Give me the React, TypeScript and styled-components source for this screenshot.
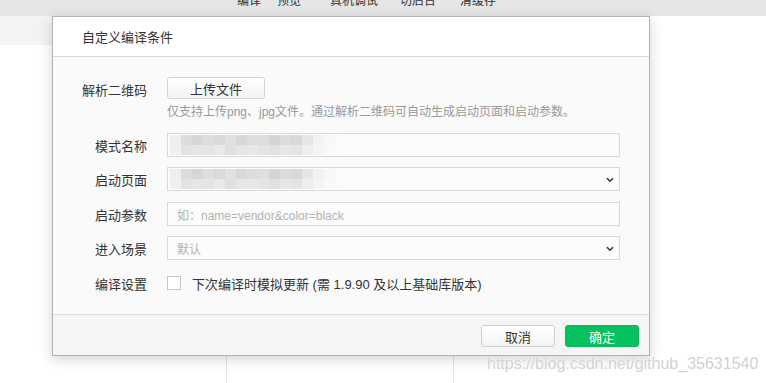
import React from "react";
import styled, { createGlobalStyle } from "styled-components";

const Global = createGlobalStyle`
  html, body { margin: 0; padding: 0; background: #fff; }
  body { font-family: "Liberation Sans", "Noto Sans CJK SC", sans-serif; }
  #root { width: 766px; height: 383px; }
`;

const Page = styled.div`
  position: relative;
  width: 766px;
  height: 383px;
  overflow: hidden;
  background: #fff;
  display: flex;
  flex-direction: column;
`;

const TopBar = styled.div`
  height: 16px;
  flex: none;
  background: #e6e6e6;
  overflow: hidden;
  display: flex;
  align-items: flex-start;
  padding-left: 237px;
`;

const ToolItem = styled.span<{ $ml: number }>`
  margin-left: ${(p) => p.$ml}px;
  margin-top: -5px;
  font-size: 12px;
  line-height: 12px;
  color: #333;
  white-space: nowrap;
`;

const SubStrip = styled.div`
  height: 29px;
  width: 320px;
  flex: none;
  background: #f3f3f3;
`;

const Behind = styled.div`
  flex: 1;
  display: flex;
  align-items: flex-end;
`;

const Column = styled.div<{ $w: number }>`
  width: ${(p) => p.$w}px;
  height: 28px;
  border-right: 1px solid #e4e4e4;
  box-sizing: border-box;
`;

const Dialog = styled.div`
  position: absolute;
  left: 52px;
  top: 16px;
  width: 598px;
  height: 340px;
  box-sizing: border-box;
  border: 1px solid #b2b2b2;
  background: #fafafa;
  box-shadow: 0 3px 12px rgba(0, 0, 0, 0.18);
  display: flex;
  flex-direction: column;
`;

const Header = styled.div`
  height: 39px;
  flex: none;
  background: #fff;
  border-bottom: 1px solid #d9d9d9;
  display: flex;
  align-items: center;
  padding-left: 29px;
  font-size: 13px;
  color: #333;
`;

const Body = styled.div`
  flex: 1;
  padding: 20px 29px 0 29px;
  display: grid;
  grid-template-columns: 65px 1fr;
  column-gap: 20px;
  align-content: start;
`;

const Label = styled.div<{ $mt?: number }>`
  margin-top: ${(p) => p.$mt ?? 0}px;
  height: 24px;
  display: flex;
  align-items: center;
  justify-content: flex-end;
  font-size: 13px;
  color: #333;
  white-space: nowrap;
`;

const Cell = styled.div<{ $mt?: number }>`
  margin-top: ${(p) => p.$mt ?? 0}px;
  min-width: 0;
`;

const UploadButton = styled.button`
  width: 98px;
  height: 22px;
  box-sizing: border-box;
  border: 1px solid #d3d3d3;
  border-radius: 3px;
  background: linear-gradient(#ffffff, #f3f3f3);
  font-family: inherit;
  font-size: 13px;
  color: #333;
  padding: 0;
  display: flex;
  align-items: center;
  justify-content: center;
`;

const Hint = styled.div`
  margin-top: 5px;
  font-size: 12px;
  line-height: 16px;
  color: #999;
  white-space: nowrap;
`;

const Field = styled.div`
  position: relative;
  height: 24px;
  box-sizing: border-box;
  border: 1px solid #d9d9d9;
  background: #fcfcfc;
  display: flex;
  align-items: center;
  padding: 0 9px;
  font-size: 12px;
  color: #b3b3b3;
`;

const Chevron = styled.svg`
  position: absolute;
  right: 5px;
  top: 9px;
`;

const BlurBox = styled.div`
  position: absolute;
  left: 2px;
  top: 1px;
  display: grid;
  grid-template-columns: repeat(17, 11px);
  grid-auto-rows: 10px;
  filter: blur(0.7px);
`;

const BlurCell = styled.div<{ $c: string }>`
  background: ${(p) => p.$c};
`;

const CheckRow = styled.div`
  display: flex;
  align-items: center;
  height: 24px;
  font-size: 13px;
  color: #333;
  white-space: nowrap;
`;

const CheckBox = styled.span`
  width: 14px;
  height: 14px;
  box-sizing: border-box;
  border: 1px solid #c8c8c8;
  background: #fff;
  margin-right: 11px;
  flex: none;
`;

const Footer = styled.div`
  height: 41px;
  flex: none;
  border-top: 1px solid #dcdcdc;
  background: #f5f5f5;
  display: flex;
  justify-content: flex-end;
  align-items: flex-start;
  gap: 10px;
  padding: 10px 10px 0 0;
  box-sizing: border-box;
`;

const FooterButton = styled.button<{ $primary?: boolean }>`
  width: 74px;
  height: 22px;
  box-sizing: border-box;
  border-radius: 3px;
  padding: 0;
  font-family: inherit;
  font-size: 13px;
  border: 1px solid ${(p) => (p.$primary ? "#07b85a" : "#d0d0d0")};
  background: ${(p) => (p.$primary ? "#07c160" : "linear-gradient(#ffffff, #f4f4f4)")};
  color: ${(p) => (p.$primary ? "#fff" : "#333")};
`;

const Watermark = styled.div`
  position: absolute;
  left: 487px;
  top: 355px;
  font-family: "Liberation Sans", Arial, sans-serif;
  font-size: 16px;
  line-height: 18px;
  color: #d2d2d2;
  text-shadow: 0 0 1px #fff, 0 0 1px #fff;
  white-space: nowrap;
`;

const shades = [
  "#eeeeee", "#dcdcdc", "#d6d6d6", "#dedede", "#d9d9d9", "#e1e1e1", "#d8d8d8", "#dddddd",
  "#dfdfdf", "#d4d4d4", "#dcdcdc", "#d8d8d8", "#e6e6e6", "#f2f2f2", "#f8f8f8", "#fbfbfb", "#fdfdfd",
  "#f0f0f0", "#e3e3e3", "#e6e6e6", "#e4e4e4", "#e9e9e9", "#e0e0e0", "#e6e6e6", "#e8e8e8",
  "#e4e4e4", "#e1e1e1", "#e7e7e7", "#e4e4e4", "#eeeeee", "#f5f5f5", "#f9f9f9", "#fbfbfb", "#fdfdfd",
];

const Blurred = () => (
  <BlurBox>
    {shades.map((c, i) => (
      <BlurCell key={i} $c={c} />
    ))}
  </BlurBox>
);

const Down = () => (
  <Chevron width="8" height="6" viewBox="0 0 8 6">
    <path d="M1 1.2 L4 4.2 L7 1.2" fill="none" stroke="#333" strokeWidth="1.6" />
  </Chevron>
);

export default function App() {
  return (
    <>
      <Global />
      <Page>
        <TopBar>
          <ToolItem $ml={0}>编译</ToolItem>
          <ToolItem $ml={16}>预览</ToolItem>
          <ToolItem $ml={29}>真机调试</ToolItem>
          <ToolItem $ml={22}>切后台</ToolItem>
          <ToolItem $ml={24}>清缓存</ToolItem>
        </TopBar>
        <SubStrip />
        <Behind>
          <Column $w={227} />
          <Column $w={227} />
        </Behind>

        <Dialog>
          <Header>自定义编译条件</Header>
          <Body>
            <Label>解析二维码</Label>
            <Cell>
              <UploadButton>上传文件</UploadButton>
              <Hint>仅支持上传png、jpg文件。通过解析二维码可自动生成启动页面和启动参数。</Hint>
            </Cell>

            <Label $mt={13}>模式名称</Label>
            <Cell $mt={13}>
              <Field>
                <Blurred />
              </Field>
            </Cell>

            <Label $mt={10}>启动页面</Label>
            <Cell $mt={10}>
              <Field>
                <Blurred />
                <Down />
              </Field>
            </Cell>

            <Label $mt={11}>启动参数</Label>
            <Cell $mt={11}>
              <Field>如：name=vendor&amp;color=black</Field>
            </Cell>

            <Label $mt={10}>进入场景</Label>
            <Cell $mt={10}>
              <Field>
                默认
                <Down />
              </Field>
            </Cell>

            <Label $mt={11}>编译设置</Label>
            <Cell $mt={11}>
              <CheckRow>
                <CheckBox />
                下次编译时模拟更新 (需 1.9.90 及以上基础库版本)
              </CheckRow>
            </Cell>
          </Body>
          <Footer>
            <FooterButton>取消</FooterButton>
            <FooterButton $primary>确定</FooterButton>
          </Footer>
        </Dialog>
        <Watermark>https://blog.csdn.net/github_35631540</Watermark>
      </Page>
    </>
  );
}
